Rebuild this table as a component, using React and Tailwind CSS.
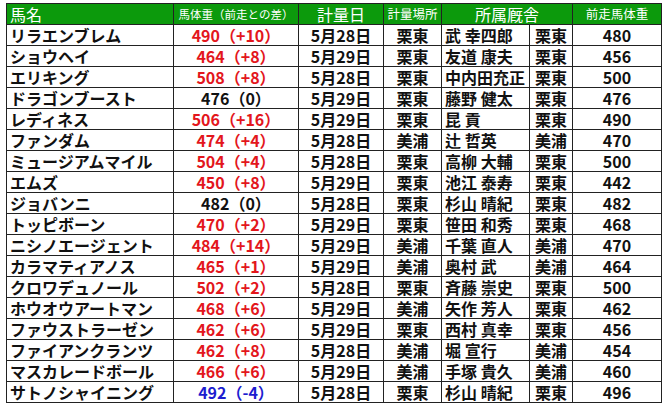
import React from "react";

const rows = [
  ["リラエンブレム", "490（+10）", "r", "5月28日", "栗東", "武 幸四郎", "栗東", "480"],
  ["ショウヘイ", "464（+8）", "r", "5月29日", "栗東", "友道 康夫", "栗東", "456"],
  ["エリキング", "508（+8）", "r", "5月28日", "栗東", "中内田充正", "栗東", "500"],
  ["ドラゴンブースト", "476（0）", "k", "5月29日", "栗東", "藤野 健太", "栗東", "476"],
  ["レディネス", "506（+16）", "r", "5月29日", "栗東", "昆 貢", "栗東", "490"],
  ["ファンダム", "474（+4）", "r", "5月28日", "美浦", "辻 哲英", "美浦", "470"],
  ["ミュージアムマイル", "504（+4）", "r", "5月28日", "栗東", "高柳 大輔", "栗東", "500"],
  ["エムズ", "450（+8）", "r", "5月29日", "栗東", "池江 泰寿", "栗東", "442"],
  ["ジョバンニ", "482（0）", "k", "5月28日", "栗東", "杉山 晴紀", "栗東", "482"],
  ["トッピボーン", "470（+2）", "r", "5月29日", "栗東", "笹田 和秀", "栗東", "468"],
  ["ニシノエージェント", "484（+14）", "r", "5月29日", "美浦", "千葉 直人", "美浦", "470"],
  ["カラマティアノス", "465（+1）", "r", "5月29日", "美浦", "奥村 武", "美浦", "464"],
  ["クロワデュノール", "502（+2）", "r", "5月28日", "栗東", "斉藤 崇史", "栗東", "500"],
  ["ホウオウアートマン", "468（+6）", "r", "5月29日", "美浦", "矢作 芳人", "栗東", "462"],
  ["ファウストラーゼン", "462（+6）", "r", "5月29日", "栗東", "西村 真幸", "栗東", "456"],
  ["ファイアンクランツ", "462（+8）", "r", "5月28日", "美浦", "堀 宣行", "美浦", "454"],
  ["マスカレードボール", "466（+6）", "r", "5月29日", "美浦", "手塚 貴久", "美浦", "460"],
  ["サトノシャイニング", "492（-4）", "b", "5月28日", "栗東", "杉山 晴紀", "栗東", "496"],
];

const color = {
  r: "text-[#e3161c]",
  k: "text-[#111]",
  b: "text-[#1c1ccf]",
};

export default function App() {
  return (
    <div
      className="w-[667px] h-[407px] bg-white pt-[3px] pl-[6px]"
      style={{ fontFamily: '"Noto Sans CJK JP", "Noto Sans", sans-serif' }}
    >
      <table className="border-collapse table-fixed w-[655px] text-[#111]">
        <colgroup>
          <col className="w-[167px]" />
          <col className="w-[125px]" />
          <col className="w-[85px]" />
          <col className="w-[58px]" />
          <col className="w-[88px]" />
          <col className="w-[43px]" />
          <col className="w-[89px]" />
        </colgroup>
        <thead>
          <tr className="h-[21px] bg-[#0c9a0c] text-white leading-[18px]">
            <th className="border border-[#222] p-0 text-left pl-[3px] text-[16px] font-normal">馬名</th>
            <th className="border border-[#222] p-0 text-center text-[11.5px] font-normal">馬体重（前走との差）</th>
            <th className="border border-[#222] p-0 text-center text-[16px] font-normal">計量日</th>
            <th className="border border-[#222] p-0 text-center text-[12.5px] font-normal">計量場所</th>
            <th colSpan={2} className="border border-[#222] p-0 text-center text-[16px] font-normal">所属厩舎</th>
            <th className="border border-[#222] p-0 text-center text-[12.5px] font-normal">前走馬体重</th>
          </tr>
        </thead>
        <tbody>
          {rows.map((r, i) => (
            <tr key={i} className="h-[21px] text-[16px] font-bold leading-[18px]">
              <td className="border border-[#222] p-0 pl-[3px] whitespace-nowrap overflow-hidden">{r[0]}</td>
              <td className={`border border-[#222] p-0 text-center whitespace-nowrap ${color[r[2]]}`}>{r[1]}</td>
              <td className="border border-[#222] p-0 text-center whitespace-nowrap">{r[3]}</td>
              <td className="border border-[#222] p-0 text-center whitespace-nowrap">{r[4]}</td>
              <td className="border border-[#222] p-0 pl-[3px] whitespace-nowrap overflow-hidden">{r[5]}</td>
              <td className="border border-[#222] p-0 text-center whitespace-nowrap">{r[6]}</td>
              <td className="border border-[#222] p-0 text-center whitespace-nowrap">{r[7]}</td>
            </tr>
          ))}
        </tbody>
      </table>
    </div>
  );
}
